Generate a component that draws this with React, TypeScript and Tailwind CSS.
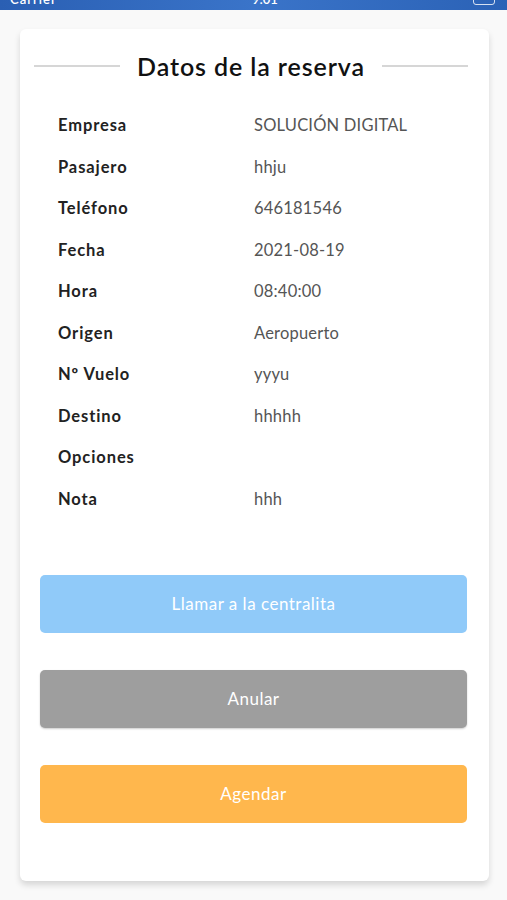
import React from "react";

const ROWS: { label: string; value: string }[] = [
  { label: "Empresa", value: "SOLUCIÓN DIGITAL" },
  { label: "Pasajero", value: "hhju" },
  { label: "Teléfono", value: "646181546" },
  { label: "Fecha", value: "2021-08-19" },
  { label: "Hora", value: "08:40:00" },
  { label: "Origen", value: "Aeropuerto" },
  { label: "Nº Vuelo", value: "yyyu" },
  { label: "Destino", value: "hhhhh" },
  { label: "Opciones", value: "" },
  { label: "Nota", value: "hhh" },
];

export default function App() {
  return (
    <div className="min-h-[900px] bg-[#f9f9f9] font-['Lato',sans-serif]">
      {/* status bar, mostly scrolled out of view */}
      <div className="h-[10px] overflow-hidden bg-gradient-to-r from-[#2a5fb3] via-[#3a74c9] to-[#2b62b6]">
        <div className="-mt-[9px] flex items-center justify-between pl-[10px] pr-[12px] text-[13px] font-semibold leading-[16px] text-white">
          <span className="tracking-[1px]">Carrier</span>
          <span>9:01</span>
          <span className="h-[12px] w-[22px] rounded-[3px] border border-white/80" />
        </div>
      </div>

      <div className="ml-5 mr-[18px] mt-[19px] rounded-[6px] bg-white pb-[58px] pt-[21px] shadow-[0_4px_6px_rgba(0,0,0,0.14)]">
        <div className="flex items-center gap-[17px] pl-[14px] pr-[21px]">
          <div className="h-[2px] flex-1 bg-[#d6d6d6]" />
          <h2 className="text-[25px] font-semibold leading-[32px] tracking-[0.9px] text-[#111]">
            Datos de la reserva
          </h2>
          <div className="h-[2px] flex-1 bg-[#d6d6d6]" />
        </div>

        <div className="mt-[23px] pl-[38px]">
          {ROWS.map((r) => (
            <div key={r.label} className="flex h-[41.5px] items-center text-[16.5px]">
              <span className="w-[196px] font-bold tracking-[0.9px] text-[#222]">{r.label}</span>
              <span className="tracking-[0.2px] text-[#555]">{r.value}</span>
            </div>
          ))}
        </div>

        <div className="mt-[55px] flex flex-col gap-[37px] pl-5 pr-[22px]">
          <button className="h-[58px] rounded-[5px] bg-[#90caf9] text-[17px] tracking-[0.5px] text-white">
            Llamar a la centralita
          </button>
          <button className="h-[58px] rounded-[5px] bg-[#9e9e9e] text-[17px] tracking-[0.5px] text-white shadow-[0_1px_2px_rgba(0,0,0,0.2)]">
            Anular
          </button>
          <button className="h-[58px] rounded-[5px] bg-[#ffb74d] text-[17px] tracking-[0.5px] text-white">
            Agendar
          </button>
        </div>
      </div>
    </div>
  );
}
